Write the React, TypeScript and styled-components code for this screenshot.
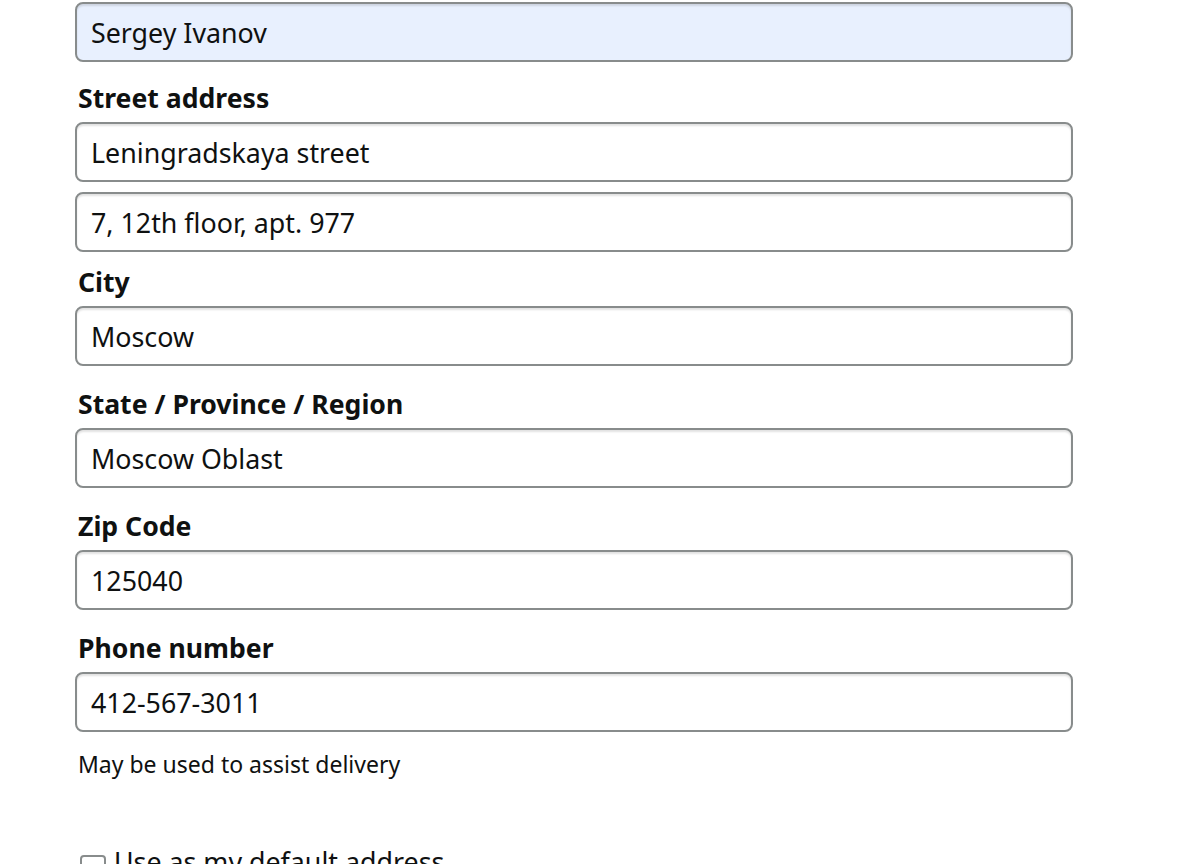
import React from 'react';
import styled, {createGlobalStyle} from 'styled-components';

const GlobalStyle = createGlobalStyle`
  html, body {
    margin: 0;
    padding: 0;
    background: #fff;
    overflow: hidden;
  }
  body {
    font-family: 'Noto Sans', 'Liberation Sans', sans-serif;
    color: #0f1111;
  }
`;

const Form = styled.form`
  width: 998px;
  margin-left: 75px;
  padding-top: 2px;
  display: flex;
  flex-direction: column;
`;

const Group = styled.div<{$gap?: number}>`
  display: flex;
  flex-direction: column;
  gap: 10px;
  margin-bottom: ${(p) => p.$gap ?? 22}px;
`;

const Label = styled.label`
  font-size: 26.6px;
  font-weight: 700;
  line-height: 30px;
  padding-left: 3px;
  padding-top: 1px;
  margin-bottom: -1px;
`;

const Input = styled.input<{$autofill?: boolean}>`
  box-sizing: border-box;
  width: 100%;
  height: 60px;
  padding: 0 14px;
  border: 2px solid #888c8c;
  border-radius: 8px;
  background: ${(p) => (p.$autofill ? '#e8f0fe' : '#fff')};
  box-shadow: inset 0 2px 2px rgba(15, 17, 17, 0.12);
  font-family: inherit;
  font-size: 26.8px;
  color: #0f1111;
  outline: none;
`;

const Hint = styled.div`
  font-size: 23px;
  line-height: 30px;
  padding-left: 3px;
  margin-top: -5px;
`;

const CheckRow = styled.label`
  display: flex;
  align-items: flex-start;
  gap: 8px;
  margin-top: 68px;
  padding-left: 5px;
  font-size: 26.8px;
  line-height: 30px;
`;

const Box = styled.span`
  box-sizing: border-box;
  width: 26px;
  height: 26px;
  margin-top: 8px;
  border: 2px solid #888c8c;
  border-radius: 4px;
  background: #fff;
`;

export default function App() {
  return (
    <>
      <GlobalStyle />
      <Form>
        <Group $gap={20}>
          <Input $autofill defaultValue="Sergey Ivanov" />
        </Group>
        <Group $gap={14}>
          <Label>Street address</Label>
          <Input defaultValue="Leningradskaya street" />
          <Input defaultValue="7, 12th floor, apt. 977" />
        </Group>
        <Group>
          <Label>City</Label>
          <Input defaultValue="Moscow" />
        </Group>
        <Group>
          <Label>State / Province / Region</Label>
          <Input defaultValue="Moscow Oblast" />
        </Group>
        <Group>
          <Label>Zip Code</Label>
          <Input defaultValue="125040" />
        </Group>
        <Group>
          <Label>Phone number</Label>
          <Input defaultValue="412-567-3011" />
        </Group>
        <Hint>May be used to assist delivery</Hint>
        <CheckRow>
          <Box />
          Use as my default address
        </CheckRow>
      </Form>
    </>
  );
}
